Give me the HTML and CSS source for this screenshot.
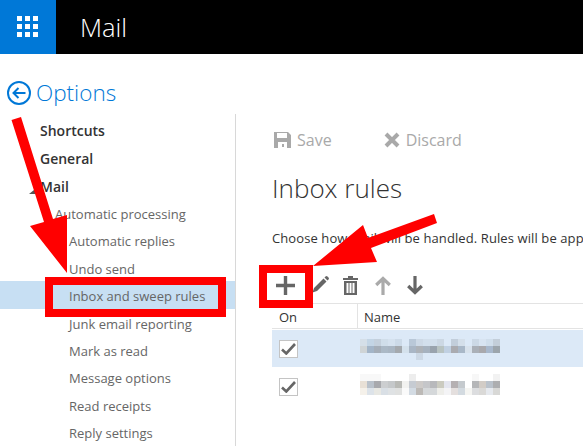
FILE: index.html
```html
<!DOCTYPE html>
<html lang="en">
<head>
  <meta charset="UTF-8" />
  <title>Mail - Options</title>
  <link rel="stylesheet" href="styles.css">
</head>
<body>

  <header class="topbar">
    <div class="launcher">
      <svg width="22" height="22" viewBox="0 0 22 22" fill="#fff">
        <path d="M0 0h5v5H0zM8 0h5v5H8zM16 0h5v5h-5zM0 8h5v5H0zM8 8h5v5H8zM16 8h5v5h-5zM0 16h5v5H0zM8 16h5v5H8zM16 16h5v5h-5z"/>
      </svg>
    </div>
    <div class="app-name">Mail</div>
  </header>

  <div class="options-title">
    <svg width="24" height="24" viewBox="0 0 24 24" fill="none" stroke="#0078d7" stroke-width="2">
      <circle cx="12" cy="12" r="11"/>
      <path d="M18.500 12H6.500M11.500 7l-5 5 5 5"/>
    </svg>
    <span>Options</span>
  </div>

  <div class="main">
    <nav class="nav">
      <div class="nav-top">Shortcuts</div>
      <div class="nav-top">General</div>
      <div class="nav-top nav-open">Mail</div>
      <div class="nav-group">Automatic processing</div>
      <div class="nav-item">Automatic replies</div>
      <div class="nav-item">Undo send</div>
      <div class="nav-item selected">Inbox and sweep rules</div>
      <div class="nav-item">Junk email reporting</div>
      <div class="nav-item">Mark as read</div>
      <div class="nav-item">Message options</div>
      <div class="nav-item">Read receipts</div>
      <div class="nav-item">Reply settings</div>
    </nav>

    <section class="content">
      <div class="actions">
        <span class="action">
          <svg width="17" height="16" viewBox="0 0 17 16" fill="#a9a9a9">
            <path fill-rule="evenodd" d="M0 0h14l3 3v13H0zM3 1v5h10V1zM4 10v6h9v-6zM8 12h2v3H8z"/>
          </svg>
          Save
        </span>
        <span class="action">
          <svg width="16" height="16" viewBox="0 0 16 16" fill="none" stroke="#a9a9a9" stroke-width="4">
            <path d="M2 2l12 12M14 2L2 14"/>
          </svg>
          Discard
        </span>
      </div>

      <h1>Inbox rules</h1>
      <p class="intro">Choose how mail will be handled. Rules will be applied in the order shown</p>

      <div class="tools">
        <svg width="19" height="19" viewBox="0 0 19 19" fill="#666"><path d="M7.800 0h3.400v7.800H19v3.400h-7.800V19H7.800v-7.800H0V7.800h7.800z"/></svg>
        <svg width="17" height="17" viewBox="0 0 17 17" fill="#666"><path d="M11.500 2.500l3 3L5 15l-4.500 1.500L2 12zM12.500 1.500l1-1a1.500 1.500 0 0 1 2 0l1 1a1.500 1.500 0 0 1 0 2l-1 1z"/></svg>
        <svg class="tool-trash" width="15" height="19" viewBox="0 0 15 19" fill="#666"><path fill-rule="evenodd" d="M5 0h5v2h5v2H0V2h5zM1 5h13v14H1zM3.500 7v10h2V7zM6.500 7v10h2V7zM9.500 7v10h2V7z"/></svg>
        <svg width="16" height="19" viewBox="0 0 16 19" fill="none" stroke="#aaa" stroke-width="3.200"><path d="M8 19V2.500M1.200 9L8 2.500 14.800 9"/></svg>
        <svg class="tool-down" width="16" height="19" viewBox="0 0 16 19" fill="none" stroke="#666" stroke-width="3.200"><path d="M8 0v16.500M1.200 10L8 16.500 14.800 10"/></svg>
      </div>

      <div class="rules">
        <div class="rules-head">
          <div class="col-on">On</div>
          <div class="col-name">Name</div>
        </div>
        <div class="rule rule-active">
          <div class="col-on"><span class="check"><svg width="15" height="12" viewBox="0 0 15 12" fill="none" stroke="#666" stroke-width="2.600"><path d="M1 6.500L5.300 10.500 14 1"/></svg></span></div>
          <svg class="blur" width="140" height="21" viewBox="0 0 20 3" shape-rendering="crispEdges">
            <path fill="#d5dfe8" d="M0 0h1v1H0z"/><path fill="#c3d5e5" d="M1 0h1v1H1z"/><path fill="#c4d0dc" d="M2 0h1v1H2z"/><path fill="#d0deea" d="M3 0h1v1H3z"/><path fill="#d5e2ef" d="M4 0h1v1H4z"/><path fill="#ccdae8" d="M5 0h1v1H5z"/><path fill="#b9c8d8" d="M7 0h1v1H7z"/><path fill="#cdd9e6" d="M8 0h1v1H8z"/><path fill="#d2dfec" d="M9 0h2v1H9z"/><path fill="#ccd8e4" d="M11 0h1v1h-1z"/><path fill="#c2cedb" d="M13 0h1v1h-1z"/><path fill="#d4dfea" d="M14 0h1v1h-1z"/><path fill="#ccd9e6" d="M16 0h1v1h-1z"/><path fill="#d8e4f1" d="M17 0h1v1h-1z"/><path fill="#d0deeb" d="M18 0h1v1h-1z"/><path fill="#c3ced9" d="M19 0h1v1h-1z"/>
            <path fill="#cfd4d6" d="M0 1h1v1H0z"/><path fill="#a3b5c8" d="M1 1h1v1H1z"/><path fill="#a5aeb8" d="M2 1h1v1H2z"/><path fill="#abb9c6" d="M3 1h1v1H3z"/><path fill="#a9b6c3" d="M4 1h1v1H4z"/><path fill="#a4a9ae" d="M5 1h1v1H5z"/><path fill="#d4e1ec" d="M6 1h1v1H6z"/><path fill="#a9b6c5" d="M7 1h1v1H7z"/><path fill="#adb2b8" d="M8 1h1v1H8z"/><path fill="#a6b2bf" d="M9 1h1v1H9z"/><path fill="#99a3ad" d="M10 1h1v1H10z"/><path fill="#b8c3c2" d="M11 1h1v1H11z"/><path fill="#c0d0e2" d="M12 1h1v1H12z"/><path fill="#aaabb0" d="M13 1h1v1H13z"/><path fill="#a9b8c8" d="M14 1h1v1H14z"/><path fill="#d8e2ec" d="M15 1h1v1H15z"/><path fill="#aab0b8" d="M16 1h1v1H16z"/><path fill="#a9a9ad" d="M17 1h1v1H17z"/><path fill="#a8b8cc" d="M18 1h1v1H18z"/><path fill="#9ca5ac" d="M19 1h1v1H19z"/>
            <path fill="#ccd8e5" d="M8 2h1v1H8z"/>
          </svg>
        </div>
        <div class="rule">
          <div class="col-on"><span class="check"><svg width="15" height="12" viewBox="0 0 15 12" fill="none" stroke="#666" stroke-width="2.600"><path d="M1 6.500L5.300 10.500 14 1"/></svg></span></div>
          <svg class="blur" width="140" height="21" viewBox="0 0 20 3" shape-rendering="crispEdges">
            <path fill="#f8f8f8" d="M0 0h3v1H0z"/><path fill="#ededed" d="M7 0h1v1H7z"/><path fill="#f7f7f7" d="M16 0h1v1h-1z"/><path fill="#f2f2f2" d="M19 0h1v1h-1z"/>
            <path fill="#e8e0d6" d="M0 1h1v1H0z"/><path fill="#b9c1ca" d="M1 1h1v1H1z"/><path fill="#a8a9ad" d="M2 1h1v1H2z"/><path fill="#ccced0" d="M3 1h1v1H3z"/><path fill="#c5c8ca" d="M4 1h1v1H4z"/><path fill="#b9bab6" d="M5 1h1v1H5z"/><path fill="#f2f2f0" d="M6 1h1v1H6z"/><path fill="#c6cbd2" d="M7 1h1v1H7z"/><path fill="#cdcac8" d="M8 1h1v1H8z"/><path fill="#c5c6c9" d="M9 1h1v1H9z"/><path fill="#b8b9bc" d="M10 1h1v1H10z"/><path fill="#cbcbc0" d="M11 1h1v1H11z"/><path fill="#e4e6ef" d="M12 1h1v1H12z"/><path fill="#b5b0b2" d="M13 1h1v1H13z"/><path fill="#c5cace" d="M14 1h1v1H14z"/><path fill="#b5b6b8" d="M16 1h1v1H16z"/><path fill="#d2ccc6" d="M17 1h1v1H17z"/><path fill="#bac2cb" d="M18 1h1v1H18z"/><path fill="#adaeb0" d="M19 1h1v1H19z"/>
            <path fill="#f5f1ea" d="M0 2h1v1H0z"/><path fill="#dde3e9" d="M1 2h1v1H1z"/><path fill="#e8e8e3" d="M2 2h1v1H2z"/><path fill="#d9dfe5" d="M3 2h1v1H3z"/><path fill="#dfe2e4" d="M4 2h1v1H4z"/><path fill="#e0e1e0" d="M5 2h1v1H5z"/><path fill="#fafafa" d="M6 2h1v1H6z"/><path fill="#d3dbe3" d="M7 2h1v1H7z"/><path fill="#bcb9b6" d="M8 2h1v1H8z"/><path fill="#d5d8da" d="M9 2h2v1H9z"/><path fill="#eeeeea" d="M11 2h1v1H11z"/><path fill="#f4f4f6" d="M12 2h1v1H12z"/><path fill="#e4dfde" d="M13 2h1v1H13z"/><path fill="#d3dae0" d="M14 2h1v1H14z"/><path fill="#f5f5f2" d="M15 2h1v1H15z"/><path fill="#dcdddf" d="M16 2h1v1H16z"/><path fill="#dad9d7" d="M17 2h1v1H17z"/><path fill="#e6e9ee" d="M18 2h1v1H18z"/><path fill="#d8d8d6" d="M19 2h1v1H19z"/>
          </svg>
        </div>
      </div>
    </section>
  </div>

  <!-- red annotations drawn over the screenshot -->
  <svg class="marks" width="583" height="446" viewBox="0 0 583 446">
    <path fill="#f00" d="M11.500 120L21 117 53 219 67 215V273L30 226 44 222z"/>
    <path fill="#f00" d="M434 214L437 223 371 248 377 262 313 266 363 225 368 238z"/>
    <path fill="none" stroke="#f00" stroke-width="8" d="M49 281H222V313H49z"/>
    <path fill="none" stroke="#f00" stroke-width="8" d="M263 269H309V304H263z"/>
  </svg>

</body>
</html>
```

FILE: styles.css
```css
* {
  box-sizing: border-box;
}

body {
  position: relative;
  width: 583px;
  height: 446px;
  margin: 0;
  overflow: hidden;
  background: #fff;
  color: #333;
  font-family: 'Open Sans', sans-serif;
}

.topbar {
  display: flex;
  align-items: center;
  height: 54px;
  background: #000;
}

.launcher {
  display: flex;
  align-items: center;
  justify-content: center;
  width: 56px;
  height: 54px;
  background: #0078d7;
}

.app-name {
  margin-left: 24px;
  color: #fff;
  font-size: 25.500px;
  font-weight: 300;
}

.options-title {
  display: flex;
  align-items: center;
  gap: 5px;
  height: 60px;
  padding: 17px 0 0 7px;
  color: #0078d7;
  font-size: 22.500px;
  font-weight: 300;
}

.main {
  display: flex;
  height: 332px;
}

.nav {
  flex: none;
  width: 236px;
  padding-top: 3px;
  border-right: 1px solid #d8d8d8;
}

.nav-top {
  height: 28px;
  padding-left: 40px;
  color: #333;
  font-size: 14px;
  font-weight: 600;
  line-height: 28px;
}

.nav-open {
  position: relative;
}

.nav-open::before {
  content: '';
  position: absolute;
  left: 29px;
  bottom: 7px;
  border-left: 10px solid transparent;
  border-bottom: 8px solid #555;
}

.nav-group,
.nav-item {
  height: 27.400px;
  color: #666;
  font-size: 13px;
  line-height: 30px;
}

.nav-group {
  margin-top: -2px;
  padding-left: 55px;
}

.nav-item {
  padding-left: 69px;
}

.selected {
  background: #c7dff3;
}

.content {
  flex: 1;
  min-width: 0;
  padding-left: 36px;
}

.actions {
  display: flex;
  gap: 52px;
  height: 52px;
  padding: 14px 0 0 2px;
  color: #a9a9a9;
  font-size: 16px;
}

.action {
  display: flex;
  align-items: center;
  gap: 6px;
  height: 24px;
}

h1 {
  margin: 4px 0 0;
  color: #333;
  font-size: 26px;
  font-weight: 300;
  line-height: 36px;
}

.intro {
  margin: 22px 0 0;
  overflow: hidden;
  font-size: 13px;
  letter-spacing: 0.100px;
  line-height: 20px;
  white-space: nowrap;
}

.tools {
  display: flex;
  gap: 17px;
  height: 20px;
  margin-top: 28px;
  padding-left: 4px;
}

.tool-trash {
  margin-left: -3px;
}

.tool-down {
  margin-left: -1px;
}

.rules {
  margin-top: 7px;
}

.rules-head {
  display: flex;
  height: 26px;
  margin-bottom: 1px;
  border-top: 1px solid #e3e3e3;
  border-bottom: 1px solid #e3e3e3;
  font-size: 13px;
  line-height: 27px;
}

.col-on {
  flex: none;
  width: 85px;
  padding-left: 7px;
}

.col-name {
  padding-left: 6px;
  border-left: 1px solid #e3e3e3;
}

.rule {
  display: flex;
  height: 37px;
}

.rule-active {
  background: #dce9f7;
}

.check {
  display: flex;
  align-items: center;
  justify-content: center;
  width: 19px;
  height: 18px;
  margin-top: 11px;
  background: #fff;
  border: 1px solid #c4c4c4;
}

.blur {
  margin: 7px 0 0 3px;
}

.rule-active .check {
  margin-top: 10px;
}

.rule-active .blur {
  margin-top: 9px;
}

.marks {
  position: absolute;
  top: 0;
  left: 0;
}
```
